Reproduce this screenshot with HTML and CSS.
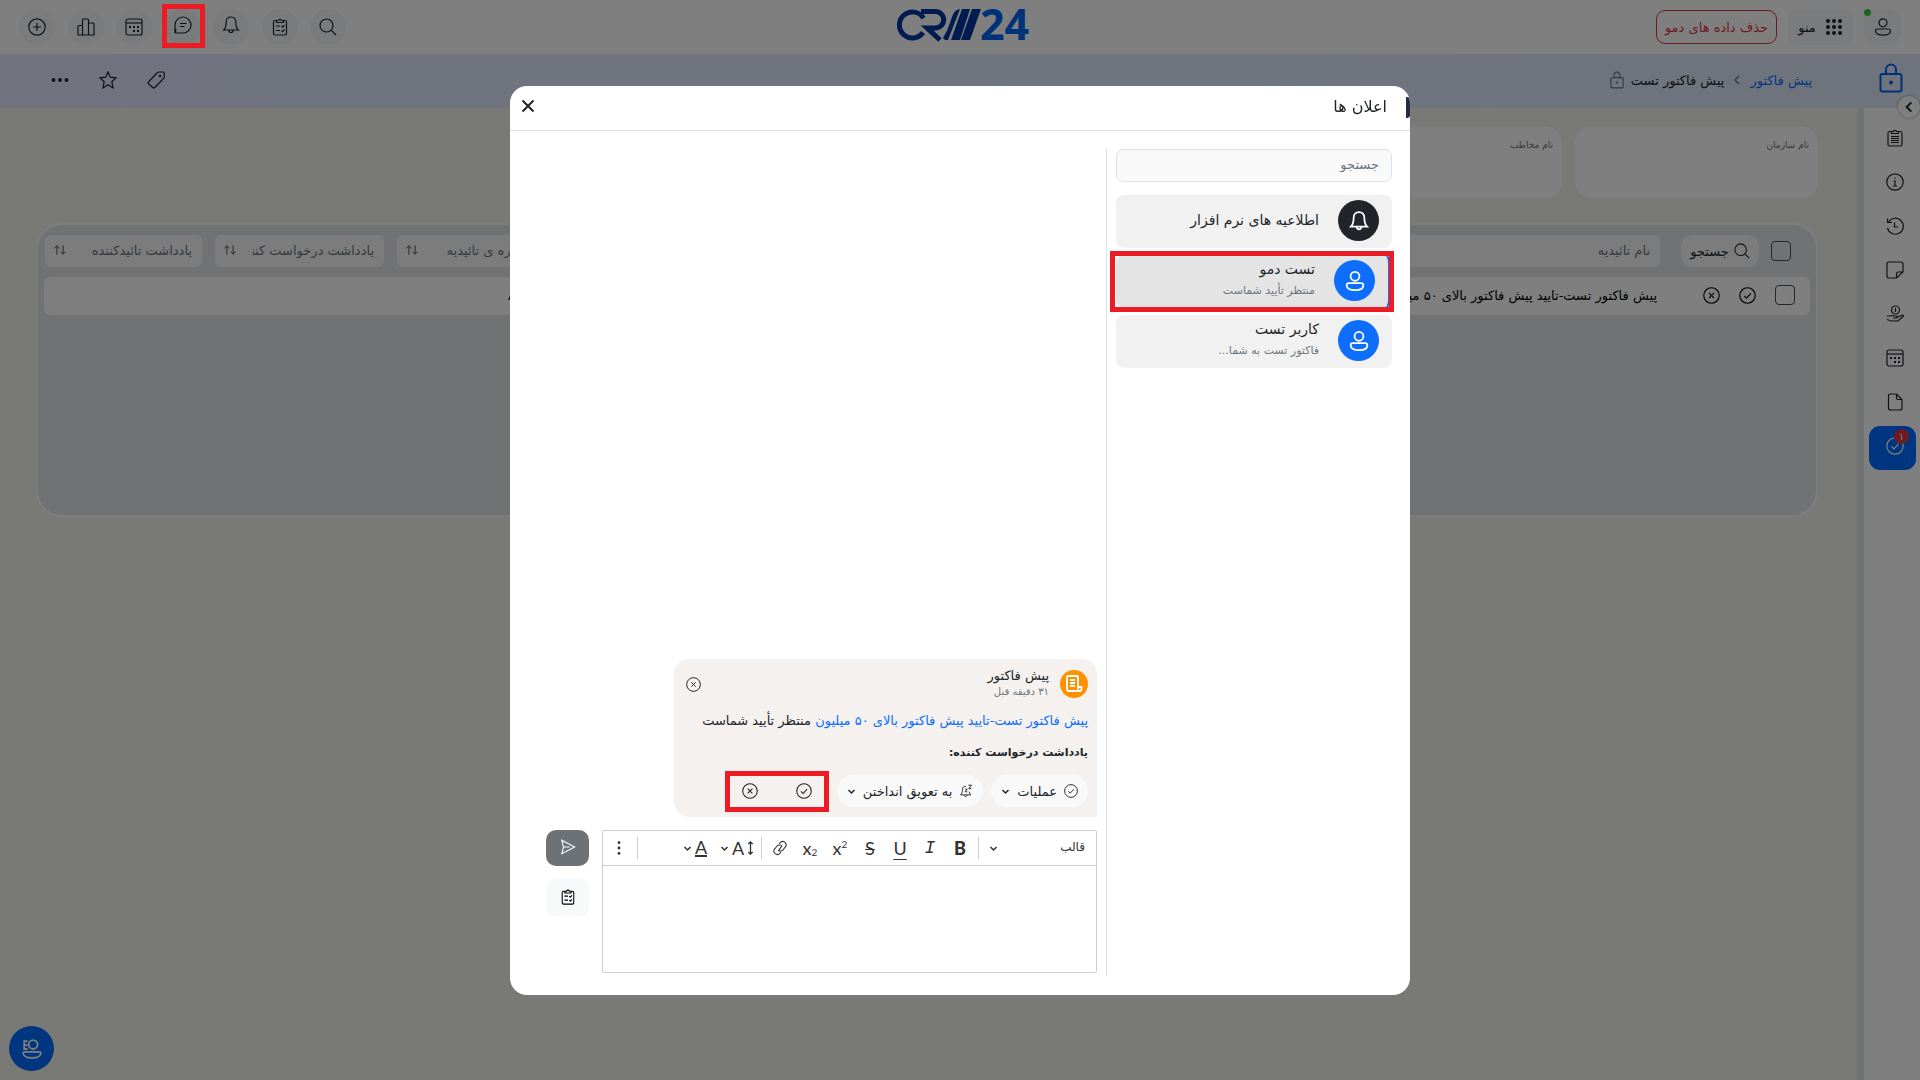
FILE: index.html
```html
<!DOCTYPE html>
<html lang="fa" dir="rtl">
<head>
    <meta charset="UTF-8">
    <meta name="viewport" content="width=device-width, initial-scale=1.0">
    <title>CRM24 - پیش فاکتور تست</title>
    <link rel="stylesheet" href="styles.css">
</head>
<body>
    <!-- icons -->
    <svg class="sprite" aria-hidden="true">
        <symbol id="i-plus" viewBox="0 0 18 18"><circle cx="9" cy="9" r="8.2"/><path d="M9 5v8M5 9h8"/></symbol>
        <symbol id="i-chart" viewBox="0 0 18 18"><path d="M1 17V8.500q0-1 1-1h3.500V17zM5.500 17V2q0-1 1-1h4q1 0 1 1v15zM11.500 17V5H16q1 0 1 1v11z"/></symbol>
        <symbol id="i-calendar" viewBox="0 0 18 18"><rect x="1" y="1" width="16" height="16" rx="2"/><path d="M1 5h16"/><path class="fill" d="M4 8h2v2H4zM8 8h2v2H8zM12 8h2v2h-2zM8 12h2v2H8zM12 12h2v2h-2z"/></symbol>
        <symbol id="i-chat" viewBox="0 0 18 18"><path d="M1 17V9a8 8 0 1 1 8 8H2.500Q1 17 1.500 15.500L2 13M6 7.500h6.500M6 10.500h4.500"/></symbol>
        <symbol id="i-bell" viewBox="0 0 18 18"><path d="M9 1c-3 0-4.800 2.200-4.800 5 0 4.500-1 6.500-2.500 8h14.600c-1.500-1.500-2.500-3.500-2.500-8 0-2.800-1.800-5-4.800-5zM7 14.500a2 2 0 0 0 4 0"/></symbol>
        <symbol id="i-check-list" viewBox="0 0 18 18"><path d="M5.500 2.500H4q-1.500 0-1.500 1.500v11.500Q2.500 17 4 17h10q1.500 0 1.500-1.500V4q0-1.500-1.500-1.500h-1.500M5.500 4.500v-2h1.800a1.800 1.800 0 0 1 3.400 0h1.800v2zM5 8h4M5 12.500h4M10.500 8l1.200 1.200L13.500 7M10.500 12.500l1.200 1.200 1.800-2.200"/></symbol>
        <symbol id="i-list" viewBox="0 0 18 18"><path d="M5.500 2.500H3.500q-1.500 0-1.500 1.500v11.500Q2 17 3.500 17h11q1.500 0 1.500-1.500V4q0-1.500-1.500-1.500h-2M5.500 4.500v-2h1.800a1.800 1.800 0 0 1 3.400 0h1.800v2zM5 7.500h8M5 9.500h8M5 11.500h8M5 13.500h8"/></symbol>
        <symbol id="i-search" viewBox="0 0 18 18"><circle cx="7.500" cy="7.500" r="6.500"/><path d="M12.200 12.200 17 17"/></symbol>
        <symbol id="i-user" viewBox="0 0 18 18"><circle cx="9" cy="4.800" r="4"/><path d="M3.500 11h11q2 0 2 2c0 2.800-3 4.200-7.500 4.200S1.500 15.800 1.500 13q0-2 2-2z"/></symbol>
        <symbol id="i-grid" viewBox="0 0 18 18"><g class="fill"><circle cx="3" cy="3" r="2"/><circle cx="9" cy="3" r="2"/><circle cx="15" cy="3" r="2"/><circle cx="3" cy="9" r="2"/><circle cx="9" cy="9" r="2"/><circle cx="15" cy="9" r="2"/><circle cx="3" cy="15" r="2"/><circle cx="9" cy="15" r="2"/><circle cx="15" cy="15" r="2"/></g></symbol>
        <symbol id="i-dots" viewBox="0 0 18 18"><g class="fill"><circle cx="2.500" cy="9" r="2"/><circle cx="9" cy="9" r="2"/><circle cx="15.500" cy="9" r="2"/></g></symbol>
        <symbol id="i-dots-v" viewBox="0 0 18 18"><g class="fill"><circle cx="9" cy="3" r="1.600"/><circle cx="9" cy="9" r="1.600"/><circle cx="9" cy="15" r="1.600"/></g></symbol>
        <symbol id="i-star" viewBox="0 0 18 18"><path d="M9 1l2.300 5.200 5.700.6-4.200 3.900 1.200 6.200L9 13.800l-5 3.100 1.200-6.200L1 6.800l5.700-.6z"/></symbol>
        <symbol id="i-tag" viewBox="0 0 18 18"><path d="M1.500 11 10 2q1-1 2.500-1H16q1.200 0 1.200 1.200V6q0 1-1 2l-8.500 8.500q-1 1-2 0l-4.200-3.700q-1-1 0-1.800z"/><circle class="fill" cx="13" cy="5" r="1.300"/></symbol>
        <symbol id="i-lock" viewBox="0 0 24 30"><path d="M7 11V6.500a5 5 0 0 1 10 0V11"/><rect x="1.500" y="11" width="21" height="17.500" rx="2"/><circle class="fill" cx="12" cy="19.500" r="2"/></symbol>
        <symbol id="i-left" viewBox="0 0 18 18"><path d="M12 3 6 9l6 6"/></symbol>
        <symbol id="i-down" viewBox="0 0 18 18"><path d="M3 6l6 6 6-6"/></symbol>
        <symbol id="i-info" viewBox="0 0 18 18"><circle cx="9" cy="9" r="8.200"/><path d="M7.500 8H9v5M7 13h4M9 4.500v1.300"/></symbol>
        <symbol id="i-history" viewBox="0 0 18 18"><path d="M2.500 5A8 8 0 1 1 1.500 11M1.500 1.500V5.500H6M8.500 5.500V10H12"/></symbol>
        <symbol id="i-note" viewBox="0 0 18 18"><path d="M10.500 17H3q-2 0-2-2V3q0-2 2-2h12q2 0 2 2v8zM10.500 17v-4q0-2 2-2H17"/></symbol>
        <symbol id="i-hand" viewBox="0 0 18 18"><circle cx="9.500" cy="5" r="4"/><path d="M9.500 3v4M1 11h3q2-1 4 0h3q1 1-.5 2H7M11 12.500l5-2.500q2 0 1 1.500l-5 4.500H5l-4-1.500"/></symbol>
        <symbol id="i-file" viewBox="0 0 18 18"><path d="M2.500 3q0-2 2-2h6L16 6.500V15q0 2-2 2H4.500q-2 0-2-2zM10.500 1v4q0 1.500 1.500 1.500h4"/></symbol>
        <symbol id="i-check" viewBox="0 0 18 18"><circle cx="9" cy="9" r="8.200"/><path d="M5.500 9.300 8 11.800l4.500-5"/></symbol>
        <symbol id="i-cancel" viewBox="0 0 18 18"><circle cx="9" cy="9" r="8.200"/><path d="M6.300 6.300l5.400 5.400M11.700 6.300l-5.400 5.400"/></symbol>
        <symbol id="i-close" viewBox="0 0 18 18"><path d="M3.500 3.500l11 11M14.500 3.500l-11 11"/></symbol>
        <symbol id="i-sort" viewBox="0 0 18 18"><path d="M5 15V4M2 7l3-3.500L8 7M13 3v11M10 11l3 3.500 3-3.500"/></symbol>
        <symbol id="i-send" viewBox="0 0 18 18"><path d="M2 1.500 16.500 9 2 16.500l2-7.500zM4 9h7"/></symbol>
        <symbol id="i-snooze" viewBox="0 0 18 18"><path d="M9 3C6 2.500 4.500 4.500 4.500 7c0 4-.8 5-2.500 7h13c-1-1.200-1.600-2.300-1.800-4M6.500 14.500c.5 2 3.500 2 4 0M12 1.500h4L12.500 6H16M8 6.500h2.500L8 10h2.500"/></symbol>
        <symbol id="i-invoice" viewBox="0 0 18 18"><path d="M13 12V2q0-1-1-1H3Q2 1 2 2v12q0 2 2 2h10.500q2 0 2-2v-2zM13 12v2.500M5 5h5M5 8h5M5 11h5"/></symbol>
        <symbol id="i-link" viewBox="0 0 18 18"><path d="M7 12.500 11.500 6M8 4.500 9.500 2.700a3.800 3.800 0 0 1 5.800 4.800L12.500 11q-2 2.200-4.500 1M10 13.500l-1.500 1.800a3.800 3.800 0 0 1-5.800-4.800L5.500 7q2-2.200 4.500-1"/></symbol>
        <symbol id="i-updown" viewBox="0 0 8 18"><path d="M4 2v14M1.500 4.500 4 2l2.500 2.500M1.500 13.500 4 16l2.500-2.500"/></symbol>
    </svg>

    <header class="topbar">
        <div class="top-start">
            <button class="user-btn" aria-label="کاربر"><span class="online"></span><svg class="icon"><use href="#i-user"/></svg></button>
            <button class="menu-btn"><svg class="icon"><use href="#i-grid"/></svg>منو</button>
            <button class="delete-demo">حذف داده های دمو</button>
        </div>
        <a class="logo" href="#" aria-label="CRM24">
            <svg width="134" height="32" viewBox="0 0 134 32" direction="ltr">
                <g class="logo-mark">
                    <path d="M27.500 9.200A13 13 0 1 0 27 23.500"/>
                    <path d="M25 2.500h14.500a8.200 8.200 0 0 1 0 16.400H31L44 31"/>
                </g>
                <path class="logo-bars" d="M47 29q5-8 8-18 3-11 9-11L52 31h-3zM66 0h8L64 31h-9zM76 0h9L74 31h-9z"/>
                <text x="84" y="31">24</text>
            </svg>
        </a>
        <nav class="quick">
            <button aria-label="جستجو"><svg class="icon"><use href="#i-search"/></svg></button>
            <button aria-label="وظایف"><svg class="icon"><use href="#i-check-list"/></svg></button>
            <button class="notify" aria-label="اعلان"><svg class="icon"><use href="#i-bell"/></svg></button>
            <button class="notify" aria-label="گفتگو"><svg class="icon"><use href="#i-chat"/></svg><span class="mark"></span></button>
            <button aria-label="تقویم"><svg class="icon"><use href="#i-calendar"/></svg></button>
            <button aria-label="گزارش"><svg class="icon"><use href="#i-chart"/></svg></button>
            <button aria-label="افزودن"><svg class="icon"><use href="#i-plus"/></svg></button>
        </nav>
    </header>

    <div class="subbar">
        <svg class="module-icon"><use href="#i-lock"/></svg>
        <nav class="breadcrumb">
            <a href="#">پیش فاکتور</a>
            <svg class="icon arrow"><use href="#i-left"/></svg>
            <span>پیش فاکتور تست</span>
            <svg class="lock"><use href="#i-lock"/></svg>
        </nav>
        <div class="sub-actions">
            <button aria-label="برچسب"><svg class="icon"><use href="#i-tag"/></svg></button>
            <button aria-label="علاقه مندی"><svg class="icon"><use href="#i-star"/></svg></button>
            <button aria-label="بیشتر"><svg class="icon"><use href="#i-dots"/></svg></button>
        </div>
    </div>

    <div class="page">
        <aside class="sidebar">
            <button class="collapse" aria-label="بستن"><svg class="icon"><use href="#i-left"/></svg></button>
            <a href="#" aria-label="خلاصه"><svg class="icon"><use href="#i-list"/></svg></a>
            <a href="#" aria-label="اطلاعات"><svg class="icon"><use href="#i-info"/></svg></a>
            <a href="#" aria-label="تاریخچه"><svg class="icon"><use href="#i-history"/></svg></a>
            <a href="#" aria-label="یادداشت"><svg class="icon"><use href="#i-note"/></svg></a>
            <a href="#" aria-label="پرداخت"><svg class="icon"><use href="#i-hand"/></svg></a>
            <a href="#" aria-label="تقویم"><svg class="icon"><use href="#i-calendar"/></svg></a>
            <a href="#" aria-label="فایل"><svg class="icon"><use href="#i-file"/></svg></a>
            <a href="#" class="active" aria-label="تائیدیه"><svg class="icon"><use href="#i-check"/></svg><span class="badge">۱</span></a>
        </aside>
        <main>
            <div class="cards">
                <div class="card">نام سازمان</div>
                <div class="card">نام مخاطب</div>
            </div>
            <div class="panel">
                <table>
                    <thead>
                        <tr>
                            <th class="col-tools">
                                <div class="tools">
                                    <input type="checkbox" aria-label="انتخاب همه">
                                    <button class="search-btn"><svg class="icon"><use href="#i-search"/></svg>جستجو</button>
                                </div>
                            </th>
                            <th><div class="filter"><input type="text" placeholder="نام تائیدیه" aria-label="نام تائیدیه"></div></th>
                            <th><div class="filter"></div></th>
                            <th><div class="filter"></div></th>
                            <th class="col-number"><div class="filter"><input type="text" placeholder="شماره ی تائیدیه" aria-label="شماره ی تائیدیه"><svg class="icon"><use href="#i-sort"/></svg></div></th>
                            <th class="col-request"><div class="filter"><input type="text" placeholder="یادداشت درخواست کننده" aria-label="یادداشت درخواست کننده"><svg class="icon"><use href="#i-sort"/></svg></div></th>
                            <th class="col-approver"><div class="filter"><input type="text" placeholder="یادداشت تائیدکننده" aria-label="یادداشت تائیدکننده"><svg class="icon"><use href="#i-sort"/></svg></div></th>
                        </tr>
                    </thead>
                    <tbody>
                        <tr>
                            <td>
                                <div class="row-tools">
                                    <input type="checkbox" aria-label="انتخاب">
                                    <button aria-label="تائید"><svg class="icon"><use href="#i-check"/></svg></button>
                                    <button aria-label="رد"><svg class="icon"><use href="#i-cancel"/></svg></button>
                                </div>
                            </td>
                            <td>پیش فاکتور تست-تایید پیش فاکتور بالای ۵۰ میلیون</td>
                            <td></td>
                            <td></td>
                            <td class="code">AP1</td>
                            <td></td>
                            <td></td>
                        </tr>
                    </tbody>
                </table>
            </div>
        </main>
    </div>

    <button class="support" aria-label="پشتیبانی">
        <svg viewBox="0 0 18 18"><circle cx="10" cy="5" r="4"/><path d="M5 2H2v7h3M2 5.500h3M3 11.500h12q2 0 2 1c0 2.500-3 4.500-8 4.500s-8-2-8-4.500q0-1 2-1z"/></svg>
    </button>

    <div class="overlay">
        <section class="modal" role="dialog" aria-label="اعلان ها">
            <header class="modal-head">
                <span class="edge"></span>
                <h1>اعلان ها</h1>
                <button aria-label="بستن"><svg class="icon"><use href="#i-close"/></svg></button>
            </header>
            <div class="modal-body">
                <div class="threads">
                    <input class="thread-search" type="text" placeholder="جستجو" aria-label="جستجو">
                    <a class="thread" href="#">
                        <span class="avatar dark"><svg class="icon"><use href="#i-bell"/></svg></span>
                        <span class="thread-text"><b>اطلاعیه های نرم افزار</b></span>
                    </a>
                    <a class="thread selected" href="#">
                        <span class="avatar"><svg class="icon"><use href="#i-user"/></svg></span>
                        <span class="thread-text"><b>تست دمو</b><small>منتظر تأیید شماست</small></span>
                        <span class="mark"></span>
                    </a>
                    <a class="thread" href="#">
                        <span class="avatar"><svg class="icon"><use href="#i-user"/></svg></span>
                        <span class="thread-text"><b>کاربر تست</b><small>فاکتور تست به شما...</small></span>
                    </a>
                </div>
                <div class="conversation">
                    <article class="message">
                        <div class="message-head">
                            <span class="type-icon"><svg class="icon"><use href="#i-invoice"/></svg></span>
                            <div class="message-title">
                                <b>پیش فاکتور</b>
                                <small>۳۱ دقیقه قبل</small>
                            </div>
                            <button aria-label="حذف"><svg class="icon"><use href="#i-cancel"/></svg></button>
                        </div>
                        <p><a href="#">پیش فاکتور تست-تایید پیش فاکتور بالای ۵۰ میلیون</a> منتظر تأیید شماست</p>
                        <p class="request-note">یادداشت درخواست کننده:</p>
                        <div class="message-actions">
                            <button class="pill"><svg class="icon"><use href="#i-check"/></svg>عملیات<svg class="icon caret"><use href="#i-down"/></svg></button>
                            <button class="pill"><svg class="icon"><use href="#i-snooze"/></svg>به تعویق انداختن<svg class="icon caret"><use href="#i-down"/></svg></button>
                            <div class="decision">
                                <button aria-label="تائید"><svg class="icon"><use href="#i-check"/></svg></button>
                                <button aria-label="رد"><svg class="icon"><use href="#i-cancel"/></svg></button>
                                <span class="mark"></span>
                            </div>
                        </div>
                    </article>
                    <div class="composer">
                        <div class="editor">
                            <div class="toolbar">
                                <select aria-label="قالب"><option>قالب</option></select>
                                <svg class="icon caret"><use href="#i-down"/></svg>
                                <i class="sep"></i>
                                <button class="bold">B</button>
                                <button class="italic">I</button>
                                <button class="underline">U</button>
                                <button class="strike">S</button>
                                <button>x<sup>2</sup></button>
                                <button>x<sub>2</sub></button>
                                <button aria-label="لینک"><svg class="icon"><use href="#i-link"/></svg></button>
                                <i class="sep"></i>
                                <button class="drop"><svg class="icon caret"><use href="#i-down"/></svg><span>A</span><svg class="updown"><use href="#i-updown"/></svg></button>
                                <button class="drop"><svg class="icon caret"><use href="#i-down"/></svg><span class="font-color">A</span></button>
                                <i class="sep last"></i>
                                <button aria-label="بیشتر"><svg class="icon"><use href="#i-dots-v"/></svg></button>
                            </div>
                            <textarea aria-label="متن پیام"></textarea>
                        </div>
                        <div class="composer-side">
                            <button class="send" aria-label="ارسال"><svg class="icon"><use href="#i-send"/></svg></button>
                            <button class="task" aria-label="وظیفه"><svg class="icon"><use href="#i-check-list"/></svg></button>
                        </div>
                    </div>
                </div>
            </div>
        </section>
    </div>
</body>
</html>
```

FILE: styles.css
```css
* {
    box-sizing: border-box;
}
body {
    font-family: "DejaVu Sans", sans-serif;
    font-size: 13px;
    background-color: #f3f3ed;
    color: #212529;
    margin: 0;
    min-height: 100vh;
    display: flex;
    flex-direction: column;
}
button, input, select, textarea {
    font: inherit;
    color: inherit;
    border: none;
    background: none;
    padding: 0;
    margin: 0;
}
button {
    display: flex;
    align-items: center;
    justify-content: center;
    cursor: pointer;
}
a {
    color: #0d6efd;
    text-decoration: none;
}
.sprite {
    display: none;
}
svg {
    fill: none;
    stroke: currentColor;
    stroke-width: 1.2;
    flex-shrink: 0;
}
.fill {
    fill: currentColor;
    stroke: none;
}
.icon {
    width: 18px;
    height: 18px;
}

/* red frame round the highlighted parts */
.mark {
    position: absolute;
    border: 5px solid #ed1c24;
    z-index: 20;
    pointer-events: none;
}

/* top bar */
.topbar {
    height: 54px;
    background-color: #fff;
    display: grid;
    grid-template-columns: 1fr auto 1fr;
    align-items: center;
    padding: 0 19px;
}
.top-start {
    display: flex;
    align-items: center;
    gap: 11px;
}
.user-btn {
    width: 37px;
    height: 36px;
    border-radius: 12px;
    background-color: #f5f6f8;
    position: relative;
}
.online {
    position: absolute;
    top: 0;
    right: 30px;
    width: 7px;
    height: 7px;
    border-radius: 50%;
    background-color: #3bc73b;
}
.menu-btn {
    width: 65px;
    height: 36px;
    gap: 9px;
    border-radius: 9px;
    background-color: #f5f6f8;
}
.delete-demo {
    height: 34px;
    width: 121px;
    border: 1px solid #dc3545;
    border-radius: 9px;
    color: #dc3545;
    white-space: nowrap;
}
.logo {
    padding: 0 0 4px 6px;
}
.logo svg {
    display: block;
    overflow: visible;
}
.logo-mark {
    stroke: #00379e;
    stroke-width: 5;
}
.logo-bars {
    fill: #00379e;
    stroke: none;
}
.logo text {
    font: 700 43px "Open Sans", sans-serif;
    fill: #0064f5;
    stroke: none;
}
.quick {
    display: flex;
    justify-content: space-between;
    width: 327px;
    justify-self: end;
}
.quick button {
    width: 36px;
    height: 36px;
    border-radius: 50%;
    background-color: #f5f6f8;
    position: relative;
}
.quick .notify {
    padding-bottom: 5px;
}
.quick .mark {
    inset: -5px -4px -3px -3px;
}

/* blue bar */
.subbar {
    height: 54px;
    background: linear-gradient(to left, #dde7f8, #deeaff 40%, #e2e7fe);
    display: flex;
    align-items: center;
    padding: 0 17px 2px 51px;
}
.module-icon {
    width: 24px;
    height: 30px;
    color: #0064f5;
    stroke-width: 2;
    margin-bottom: 4px;
}
.breadcrumb {
    display: flex;
    align-items: center;
    gap: 7px;
    margin-right: 67px;
}
.breadcrumb .arrow {
    color: #6c757d;
    width: 12px;
    height: 12px;
    stroke-width: 2;
}
.breadcrumb .lock {
    width: 14px;
    height: 18px;
    color: #6c757d;
    stroke-width: 2;
}
.sub-actions {
    display: flex;
    gap: 30px;
    margin-right: auto;
}

/* page */
.page {
    flex: 1;
    display: flex;
}
.sidebar {
    width: 63px;
    background-color: #fff;
    border-left: 7px solid #e3e4e8;
    padding: 10px 4px 0 5px;
    position: relative;
}
.sidebar a {
    display: flex;
    align-items: center;
    justify-content: center;
    height: 44px;
    padding: 0 0 4px 4px;
    color: #212529;
    border-radius: 11px;
    position: relative;
}
.sidebar .active {
    background-color: #006aff;
    color: #fff;
}
.badge {
    position: absolute;
    top: 3px;
    right: 7px;
    width: 15px;
    height: 15px;
    border-radius: 50%;
    background-color: #dc3545;
    font-size: 10px;
    line-height: 15px;
    text-align: center;
}
.collapse {
    position: absolute;
    top: -12px;
    right: 0;
    width: 22px;
    height: 22px;
    border-radius: 50%;
    background-color: #fff;
    box-shadow: 0 0 2px #6c757d;
}
.collapse .icon {
    width: 14px;
    height: 14px;
    stroke-width: 2.5;
}
main {
    flex: 1;
    min-width: 0;
    padding: 19px 39px 0 36px;
}
.cards {
    display: flex;
    gap: 13px;
}
.card {
    width: 243px;
    height: 71px;
    border-radius: 16px;
    background-color: #fff;
    padding: 13px 9px;
    font-size: 9px;
    color: #6c757d;
}
.panel {
    margin-top: 25px;
    min-height: 294px;
    border: 2px solid #fbfbfb;
    border-radius: 26px;
    background-color: #e3e5e9;
    padding: 10px 6px 0 6px;
}
table {
    width: 100%;
    table-layout: fixed;
    border-collapse: collapse;
}
th {
    padding: 0 6px 10px 7px;
    font-weight: normal;
}
th:last-child {
    padding-left: 1px;
}
.col-tools {
    width: 144px;
    padding: 0 19px 10px 0;
}
.col-number {
    width: 159px;
}
.col-request {
    width: 182px;
}
.col-approver {
    width: 164px;
}
.tools {
    display: flex;
    align-items: center;
    gap: 12px;
}
.search-btn {
    height: 32px;
    width: 78px;
    gap: 5px;
    border-radius: 12px;
    background-color: #f8f9fa;
}
.search-btn .icon {
    width: 16px;
    height: 16px;
}
input[type="checkbox"] {
    appearance: none;
    width: 20px;
    height: 20px;
    border: 1px solid #495057;
    border-radius: 4px;
}
.filter {
    display: flex;
    align-items: center;
    gap: 16px;
    height: 32px;
    padding: 0 10px 2px 8px;
    border-radius: 6px;
    background-color: #f8f9fa;
    color: #495057;
}
.filter input {
    flex: 1;
    min-width: 0;
}
.filter .icon {
    width: 14px;
    height: 14px;
}
::placeholder {
    color: #6c757d;
    opacity: 1;
}
td {
    height: 38px;
    padding: 0 9px 2px;
    background-color: #fff;
    white-space: nowrap;
    overflow: hidden;
    color: #000;
}
td.code {
    padding-right: 16px;
}
td:first-child {
    border-radius: 0 6px 6px 0;
    padding: 0 15px 2px;
}
td:last-child {
    border-radius: 6px 0 0 6px;
}
.row-tools {
    display: flex;
    align-items: center;
    gap: 19px;
}
.row-tools .icon {
    width: 17px;
    height: 17px;
    display: block;
}
.support {
    position: fixed;
    left: 9px;
    bottom: 9px;
    width: 45px;
    height: 45px;
    border-radius: 50%;
    background-color: #006aff;
    color: #fff;
}
.support svg {
    width: 20px;
    height: 24px;
    stroke-width: 1.6;
}

/* modal */
.overlay {
    position: fixed;
    inset: 0;
    z-index: 10;
    background-color: rgba(0, 0, 0, 0.5);
    padding: 86px 20px 85px;
    display: flex;
    justify-content: center;
}
.modal {
    width: 100%;
    max-width: 900px;
    background-color: #fff;
    border-radius: 17px;
    display: flex;
    flex-direction: column;
    overflow: hidden;
}
.modal-head {
    height: 45px;
    border-bottom: 1px solid #dee2e6;
    display: flex;
    align-items: center;
    justify-content: space-between;
    padding: 0 23px 4px 9px;
    position: relative;
}
.modal-head h1 {
    font-size: 16px;
    font-weight: normal;
    margin: 0;
}
.edge {
    position: absolute;
    right: 0;
    top: 11px;
    width: 4px;
    height: 21px;
    border-radius: 0 3px 3px 0;
    background-color: #252b42;
}
.modal-head .icon {
    stroke-width: 2;
}
.modal-body {
    flex: 1;
    min-height: 0;
    display: flex;
    padding: 18px 18px 19px 36px;
}
.threads {
    width: 286px;
    padding-left: 9px;
    border-left: 1px solid #dee2e6;
    display: flex;
    flex-direction: column;
    gap: 7px;
}
.thread-search {
    height: 33px;
    border: 1px solid #dee2e6;
    border-radius: 7px;
    background-color: #f9f9f9;
    padding: 0 12px 2px;
    margin-bottom: 6px;
}
.thread {
    display: flex;
    align-items: center;
    gap: 19px;
    height: 53px;
    padding: 0 13px 2px;
    border-radius: 8px;
    background-color: #f1f1f1;
    color: #212529;
    position: relative;
}
.thread.selected {
    background-color: #e4e4e4;
    border-right: 4px solid #0d6efd;
}
.thread .mark {
    inset: -4px -6px -4px -6px;
}
.avatar {
    width: 41px;
    height: 41px;
    border-radius: 50%;
    background-color: #0d6efd;
    color: #fff;
    display: flex;
    align-items: center;
    justify-content: center;
}
.avatar.dark {
    background-color: #212529;
}
.avatar .icon {
    width: 20px;
    height: 20px;
    stroke-width: 1.6;
}
.thread-text {
    display: flex;
    flex-direction: column;
    gap: 5px;
    padding-bottom: 2px;
}
b {
    font-weight: normal;
}
.thread-text b {
    font-size: 14px;
    line-height: 18px;
}
.thread-text small {
    font-size: 11px;
    line-height: 16px;
    color: #6c757d;
}
.conversation {
    flex: 1;
    min-width: 0;
    padding-right: 9px;
    display: flex;
    flex-direction: column;
    justify-content: flex-end;
}
.message {
    width: 423px;
    height: 158px;
    border-radius: 15px 15px 0 15px;
    background-color: #f5f1ee;
    padding: 10px 9px 8px;
    margin-bottom: 13px;
}
.message-head {
    display: flex;
    align-items: center;
    gap: 11px;
    height: 30px;
}
.message-head button {
    margin: 0 auto 0 3px;
}
.message-head button .icon {
    width: 15px;
    height: 15px;
}
.type-icon {
    width: 28px;
    height: 28px;
    border-radius: 50%;
    background-color: #ff9000;
    color: #fff;
    display: flex;
    align-items: center;
    justify-content: center;
}
.type-icon .icon {
    stroke-width: 1.8;
}
.message-title {
    display: flex;
    flex-direction: column;
    line-height: 16px;
}
.message-title small {
    font-size: 10px;
    color: #6c757d;
}
.message p {
    margin: 12px 0 0;
    line-height: 20px;
    white-space: nowrap;
}
.message .request-note {
    font-size: 11px;
    font-weight: bold;
}
.message-actions {
    display: flex;
    align-items: center;
    gap: 8px;
    margin-top: 12px;
}
.pill {
    height: 32px;
    padding: 0 10px;
    gap: 7px;
    border-radius: 16px;
    background-color: #f9f9f9;
    white-space: nowrap;
}
.pill .icon {
    width: 14px;
    height: 14px;
}
.icon.caret,
.pill .caret {
    width: 9px;
    height: 9px;
    stroke-width: 3;
}
.decision {
    display: flex;
    gap: 38px;
    padding: 0 17px;
    position: relative;
}
.decision .icon {
    width: 16px;
    height: 16px;
}
.decision .mark {
    inset: -12px 0 -13px 0;
}

/* editor */
.composer {
    display: flex;
    gap: 13px;
}
.editor {
    flex: 1;
    min-width: 0;
    border: 1px solid #ccced1;
    border-radius: 2px;
    margin-bottom: 3px;
}
.toolbar {
    display: flex;
    align-items: center;
    height: 35px;
    padding: 0 11px 0 1px;
    border-bottom: 1px solid #ccced1;
    color: #333;
}
.toolbar select {
    appearance: none;
    width: 82px;
    font-size: 12px;
    padding-bottom: 2px;
}
.toolbar button {
    width: 30px;
    height: 28px;
    direction: ltr;
    font: 18px/20px Lato, sans-serif;
}
.toolbar .icon {
    width: 16px;
    height: 16px;
}
.toolbar .caret {
    width: 9px;
    height: 9px;
}
.toolbar .bold {
    font-weight: 900;
}
.toolbar .italic {
    font-family: "Liberation Mono", monospace;
    font-style: italic;
}
.underline {
    text-decoration: underline 1px;
    text-underline-offset: 4px;
}
.strike {
    text-decoration: line-through 1px;
}
sup, sub {
    font-size: 10px;
    line-height: 0;
}
.toolbar sup {
    margin-bottom: 8px;
}
.toolbar sub {
    margin-top: 8px;
}
.toolbar .drop {
    width: 42px;
    gap: 3px;
}
.updown {
    width: 7px;
    height: 16px;
    stroke-width: 1.5;
}
.font-color {
    border-bottom: 2px solid #333;
    line-height: 15px;
}
.sep {
    width: 1px;
    height: 22px;
    margin: 0 3px;
    background-color: #ccced1;
}
.sep.last {
    margin-right: auto;
}
.toolbar > .caret {
    margin: 0 5px 0 7px;
}
textarea {
    display: block;
    width: 100%;
    height: 106px;
    resize: none;
    padding: 8px;
}
.composer-side {
    display: flex;
    flex-direction: column;
    gap: 12px;
}
.composer-side button {
    width: 43px;
    height: 39px;
    border-radius: 10px;
    background-color: #f8f9fb;
    color: #000;
    padding-bottom: 2px;
}
.composer-side .send {
    height: 36px;
    background-color: #6c7275;
    color: #fff;
}
.composer-side .icon {
    width: 16px;
    height: 16px;
}
```
